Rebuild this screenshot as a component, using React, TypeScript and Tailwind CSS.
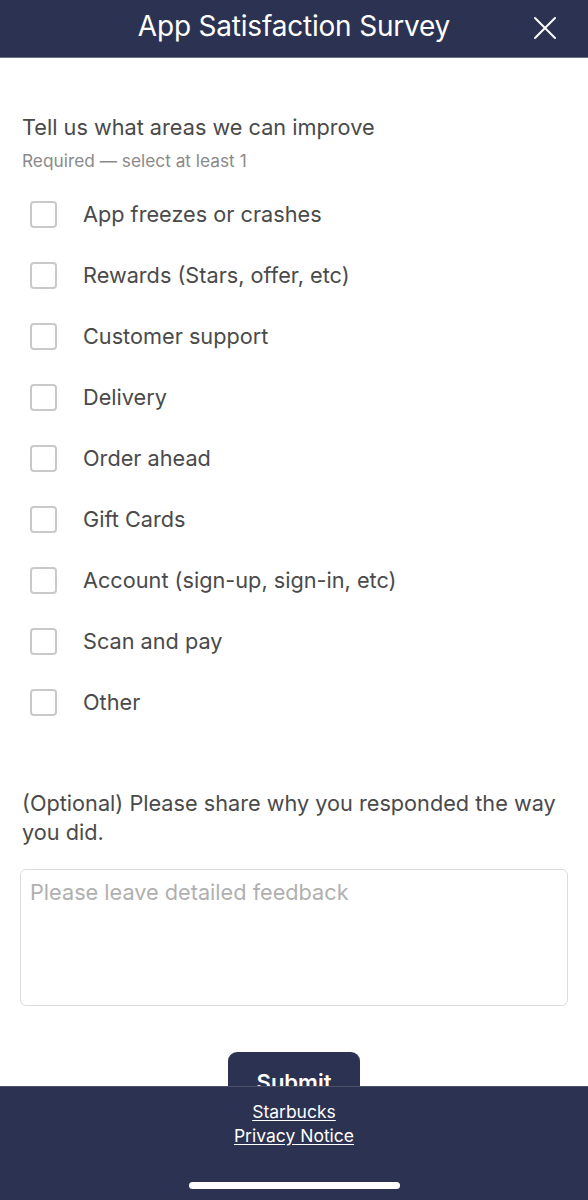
import React, { useState } from 'react';

const OPTIONS = [
  'App freezes or crashes',
  'Rewards (Stars, offer, etc)',
  'Customer support',
  'Delivery',
  'Order ahead',
  'Gift Cards',
  'Account (sign-up, sign-in, etc)',
  'Scan and pay',
  'Other',
];

export default function App() {
  const [checked, setChecked] = useState<string[]>([]);
  const [feedback, setFeedback] = useState('');

  function toggle(opt: string) {
    setChecked((prev) => (prev.includes(opt) ? prev.filter((o) => o !== opt) : [...prev, opt]));
  }

  return (
    <div
      className="w-[588px] h-[1200px] flex flex-col bg-white overflow-hidden"
      style={{ fontFamily: 'Inter, "Noto Sans", sans-serif' }}
    >
      {/* Header */}
      <div className="h-[57px] shrink-0 bg-[#2c3251] flex items-center relative">
        <div className="flex-1 text-center text-white text-[28px] leading-none tracking-[-0.2px] pb-[6px]">
          App Satisfaction Survey
        </div>
        <button className="absolute right-[31px] top-[16px] w-[24px] h-[24px]">
          <svg viewBox="0 0 24 24" className="w-[24px] h-[24px]" fill="none" stroke="white" strokeWidth="2" strokeLinecap="round">
            <path d="M2 2 L22 22 M22 2 L2 22" />
          </svg>
        </button>
      </div>
      <div className="h-px bg-[#6b6f80] shrink-0" />

      {/* Content */}
      <div className="flex-1 overflow-hidden">
        <div className="px-[22px] pt-[55px]">
          <div className="text-[21.7px] leading-[28px] text-[#4a4a4a]">Tell us what areas we can improve</div>
          <div className="text-[17.3px] leading-[22px] text-[#8a8a8a] mt-[9px]">Required — select at least 1</div>

          <div className="mt-[12px] flex flex-col">
            {OPTIONS.map((opt) => (
              <label key={opt} className="h-[61px] flex items-center cursor-pointer">
                <span
                  onClick={() => toggle(opt)}
                  className={`ml-[8px] w-[27px] h-[27px] rounded-[4px] border-2 ${
                    checked.includes(opt) ? 'bg-[#2c3251] border-[#2c3251]' : 'border-[#c9c9c9]'
                  }`}
                />
                <span className="ml-[26px] text-[21.7px] text-[#4a4a4a]">{opt}</span>
              </label>
            ))}
          </div>

          <div className="mt-[56px] text-[21.7px] leading-[29px] text-[#4a4a4a]">
            (Optional) Please share why you responded the way you did.
          </div>
        </div>

        <div className="px-[20px] mt-[22px]">
          <textarea
            value={feedback}
            onChange={(e) => setFeedback(e.target.value)}
            placeholder="Please leave detailed feedback"
            className="w-full h-[137px] resize-none rounded-[6px] border border-[#dcdcdc] px-[9px] py-[6px] text-[21.7px] text-[#4a4a4a] placeholder:text-[#b0b0b0] outline-none"
          />
        </div>

        <div className="flex justify-center mt-[40px]">
          <button className="w-[132px] h-[60px] rounded-[9px] bg-[#2c3251] text-white text-[22px] font-semibold">
            Submit
          </button>
        </div>
      </div>

      {/* Footer */}
      <div className="h-[114px] shrink-0 bg-[#2c3251] border-t border-[#4a4f66] flex flex-col items-center">
        <a href="#" className="mt-[13px] text-white text-[17.5px] leading-[24px] underline underline-offset-2">
          Starbucks
        </a>
        <a href="#" className="text-white text-[17.5px] leading-[24px] underline underline-offset-2">
          Privacy Notice
        </a>
        <div className="mt-[34px] w-[211px] h-[7px] rounded-full bg-white" />
      </div>
    </div>
  );
}
